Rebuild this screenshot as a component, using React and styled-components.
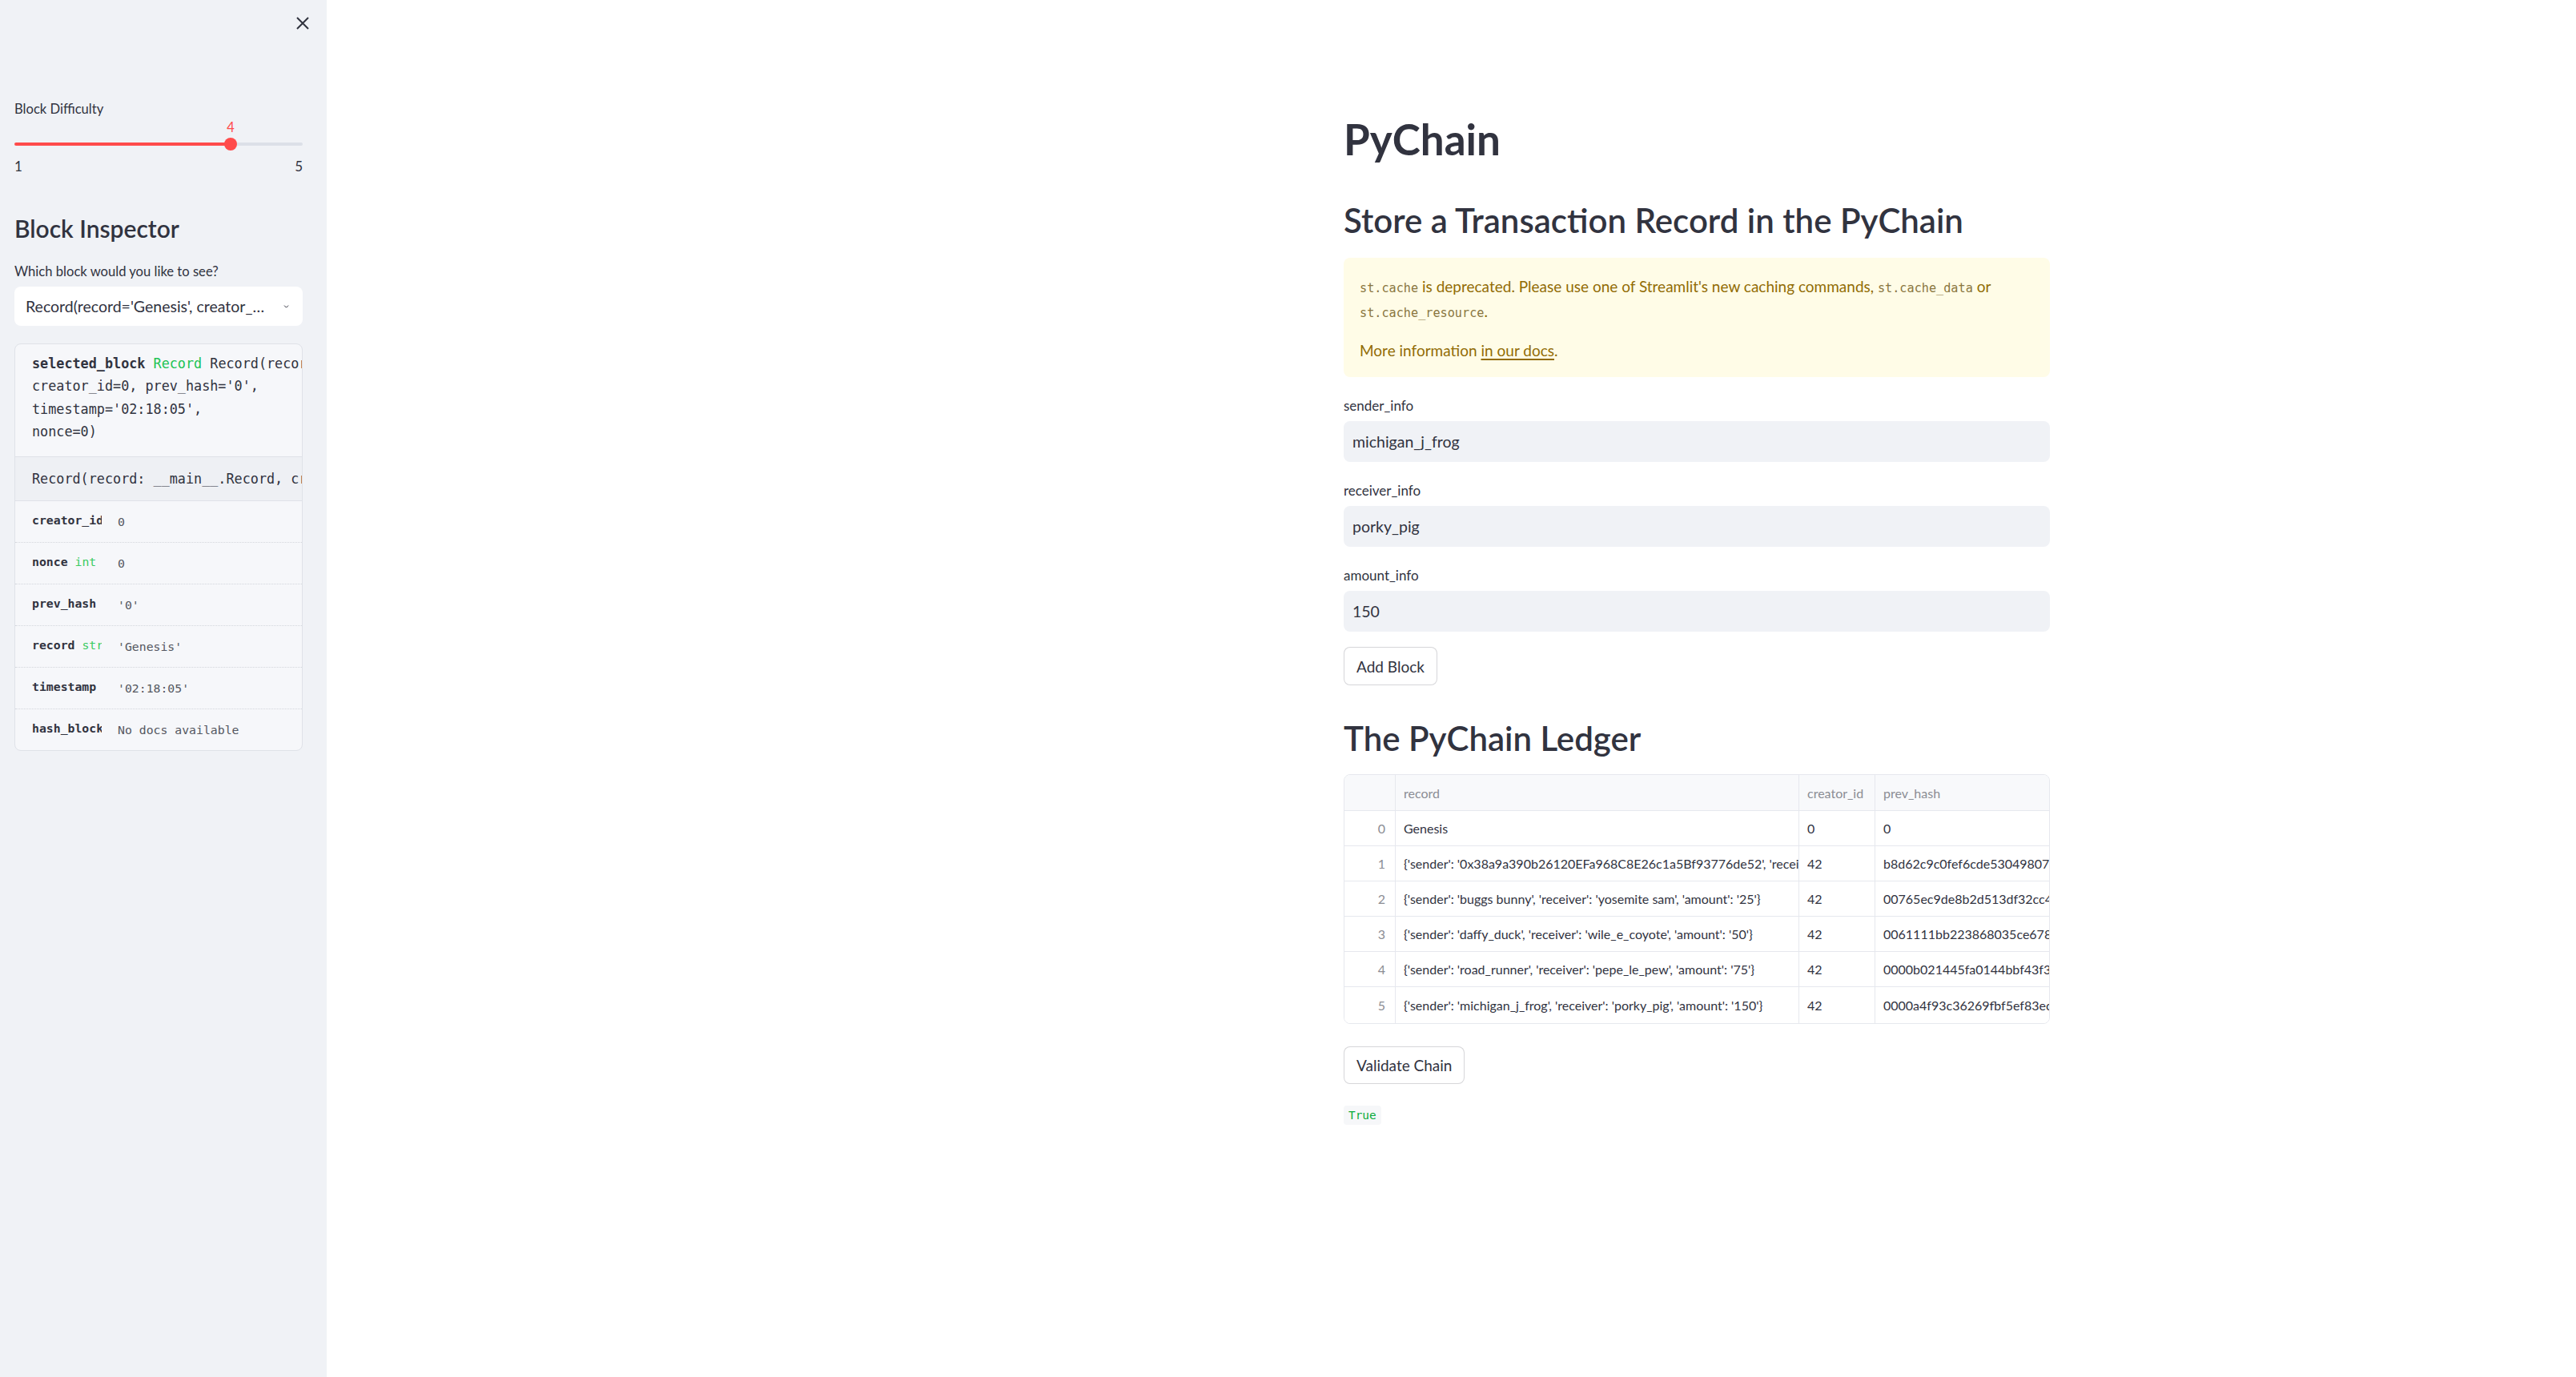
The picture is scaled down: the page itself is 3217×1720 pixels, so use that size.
import React from "react";
import styled, { createGlobalStyle } from "styled-components";
import { ChevronDown } from "lucide-react";

const GlobalStyle = createGlobalStyle`
  html, body {
    margin: 0;
    padding: 0;
    background: #ffffff;
  }
  body {
    font-family: Lato, "Noto Sans", sans-serif;
    color: #31333f;
  }
  * {
    box-sizing: border-box;
  }
`;

const MONO = `"DejaVu Sans Mono", "Liberation Mono", monospace`;

const Page = styled.div`
  display: flex;
  min-height: 1720px;
`;

/* ---------- sidebar ---------- */

const Sidebar = styled.aside`
  width: 408px;
  flex-shrink: 0;
  background: #f0f2f6;
  padding: 0 30px 0 18px;
  display: flex;
  flex-direction: column;
`;

const CloseRow = styled.div`
  height: 58px;
  margin-right: -8px;
  display: flex;
  align-items: center;
  justify-content: flex-end;
`;

const SliderLabel = styled.div`
  margin-top: 66px;
  font-size: 16.6px;
  line-height: 24px;
`;

const SliderTrack = styled.div`
  position: relative;
  margin-top: 24px;
  height: 16px;
  display: flex;
  align-items: center;
`;

const Rail = styled.div`
  width: 100%;
  height: 4px;
  border-radius: 2px;
  background: linear-gradient(
    to right,
    #ff4b4b 0,
    #ff4b4b ${(p) => p.$pct}%,
    #dce0e8 ${(p) => p.$pct}%,
    #dce0e8 100%
  );
`;

const Thumb = styled.div`
  position: absolute;
  top: 0;
  left: ${(p) => p.$pct}%;
  width: 16px;
  height: 16px;
  margin-left: -8px;
  border-radius: 50%;
  background: #ff4b4b;
`;

const ThumbValue = styled.span`
  position: absolute;
  top: -23px;
  left: 50%;
  transform: translateX(-50%);
  font-size: 16.5px;
  line-height: 20px;
  color: #ff4b4b;
`;

const Ticks = styled.div`
  margin-top: 9px;
  display: flex;
  justify-content: space-between;
  font-size: 17px;
  line-height: 22px;
`;

const SideHeading = styled.h3`
  margin: 46px 0 0;
  font-size: 30px;
  line-height: 40px;
  font-weight: 600;
`;

const SideLabel = styled.div`
  margin-top: 23px;
  font-size: 16.6px;
  line-height: 22px;
`;

const Select = styled.div`
  margin-top: 8px;
  height: 49px;
  background: #ffffff;
  border-radius: 8px;
  padding: 0 16px 0 14px;
  display: flex;
  align-items: center;
  justify-content: space-between;
  gap: 20px;
  font-size: 19.5px;
`;

const SelectText = styled.span`
  overflow: hidden;
  white-space: nowrap;
  text-overflow: ellipsis;
`;

const HelpCard = styled.div`
  margin-top: 22px;
  border: 1px solid #dfe2e8;
  border-radius: 8px;
  background: #f6f7fa;
  overflow: hidden;
  font-family: ${MONO};
`;

const HelpHead = styled.div`
  padding: 10px 0 17px 21px;
  font-size: 16.8px;
  line-height: 28.3px;
  white-space: pre;
  overflow: hidden;
  color: #31333f;
`;

const Strong = styled.span`
  font-weight: 700;
`;

const TypeName = styled.span`
  color: ${(p) => (p.$soft ? "#3ccb62" : "#21c354")};
  font-weight: 400;
`;

const HelpDoc = styled.div`
  height: 56px;
  border-top: 1px solid #dfe2e8;
  border-bottom: 1px solid #dfe2e8;
  background: #eef0f4;
  padding-left: 21px;
  font-size: 16.8px;
  line-height: 54px;
  white-space: pre;
  overflow: hidden;
`;

const HelpRow = styled.div`
  height: 52px;
  display: grid;
  grid-template-columns: 87px 1fr;
  column-gap: 20px;
  align-items: center;
  padding-left: 21px;
  border-bottom: 1px dotted #d3d6dc;
  &:last-child {
    border-bottom: none;
    height: 51px;
  }
`;

const HelpName = styled.span`
  font-size: 14.8px;
  font-weight: 700;
  white-space: nowrap;
  overflow: hidden;
  margin-top: -5px;
`;

const HelpValue = styled.span`
  font-size: 14.8px;
  color: #555761;
  white-space: nowrap;
`;

/* ---------- main ---------- */

const Main = styled.main`
  flex: 1;
`;

const Column = styled.div`
  width: 882px;
  margin-left: 1270px;
  display: flex;
  flex-direction: column;
  align-items: flex-start;
`;

const Title = styled.h1`
  margin: 142px 0 0;
  font-size: 53px;
  line-height: 64px;
  font-weight: 700;
`;

const Heading = styled.h2`
  margin: ${(p) => p.$top}px 0 0;
  font-size: 42px;
  line-height: 48px;
  font-weight: 600;
`;

const Warning = styled.div`
  margin-top: 23px;
  width: 100%;
  background: #fffce7;
  color: #926c05;
  border-radius: 8px;
  padding: 20px 20px 18px;
`;

const WarnPara = styled.p`
  margin: 0;
  font-size: 19px;
  line-height: 31px;
  & + & {
    margin-top: 18px;
  }
`;

const InlineCode = styled.code`
  font-family: ${MONO};
  font-size: 15.2px;
  line-height: 1;
  color: #8a7640;
`;

const DocLink = styled.a`
  color: #926c05;
  text-decoration: underline;
  text-decoration-thickness: 2px;
  text-underline-offset: 3px;
`;

const Field = styled.div`
  margin-top: 25px;
  width: 100%;
`;

const FieldLabel = styled.label`
  display: block;
  font-size: 17px;
  line-height: 22px;
`;

const Input = styled.div`
  margin-top: 8px;
  height: 51px;
  background: #f0f2f6;
  border-radius: 8px;
  padding: 0 11px;
  display: flex;
  align-items: center;
  font-size: 19.5px;
`;

const Button = styled.button`
  margin-top: ${(p) => p.$top}px;
  height: ${(p) => p.$h}px;
  padding: 0 15px;
  background: #ffffff;
  border: 1px solid rgba(49, 51, 63, 0.2);
  border-radius: 8px;
  font-family: inherit;
  font-size: 19px;
  color: #31333f;
`;

const Table = styled.div`
  margin-top: 21px;
  width: 100%;
  border: 1px solid #e6e8ee;
  border-radius: 8px;
  overflow: hidden;
`;

const TRow = styled.div`
  display: grid;
  grid-template-columns: 64px 504px 95px 1fr;
  height: ${(p) => (p.$head ? 45 : 44)}px;
  background: ${(p) => (p.$head ? "#f8f9fb" : "#ffffff")};
  border-bottom: 1px solid #e6e8ee;
  &:last-child {
    border-bottom: none;
    height: 45px;
  }
`;

const Cell = styled.div`
  display: flex;
  align-items: center;
  justify-content: ${(p) => (p.$index ? "flex-end" : "flex-start")};
  padding: 0 ${(p) => (p.$index ? "12px" : "10px")};
  border-right: 1px solid #e6e8ee;
  font-size: 16px;
  white-space: nowrap;
  overflow: hidden;
  color: ${(p) => (p.$muted ? "#8b8d94" : "#31333f")};
  &:last-child {
    border-right: none;
  }
`;

const Result = styled.code`
  margin-top: 27px;
  padding: 0 6px;
  height: 24px;
  line-height: 24px;
  border-radius: 4px;
  background: #f6f7f9;
  color: #09ab3b;
  font-family: ${MONO};
  font-size: 14.4px;
`;

const CloseIcon = () => (
  <svg width="16" height="16" viewBox="0 0 16 16">
    <path d="M1 1L15 15M15 1L1 15" stroke="#31333f" strokeWidth="2" />
  </svg>
);

const ledger = [
  ["0", "Genesis", "0", "0"],
  [
    "1",
    "{'sender': '0x38a9a390b26120EFa968C8E26c1a5Bf93776de52', 'receiver': 'porky_pig', 'amount': '100'}",
    "42",
    "b8d62c9c0fef6cde530498075c",
  ],
  [
    "2",
    "{'sender': 'buggs bunny', 'receiver': 'yosemite sam', 'amount': '25'}",
    "42",
    "00765ec9de8b2d513df32cc4a",
  ],
  [
    "3",
    "{'sender': 'daffy_duck', 'receiver': 'wile_e_coyote', 'amount': '50'}",
    "42",
    "0061111bb223868035ce678c0",
  ],
  [
    "4",
    "{'sender': 'road_runner', 'receiver': 'pepe_le_pew', 'amount': '75'}",
    "42",
    "0000b021445fa0144bbf43f3e8",
  ],
  [
    "5",
    "{'sender': 'michigan_j_frog', 'receiver': 'porky_pig', 'amount': '150'}",
    "42",
    "0000a4f93c36269fbf5ef83ec5",
  ],
];

const fields = [
  ["sender_info", "michigan_j_frog"],
  ["receiver_info", "porky_pig"],
  ["amount_info", "150"],
];

const attrs = [
  { name: "creator_id", value: "0" },
  { name: "nonce", type: "int", value: "0" },
  { name: "prev_hash", value: "'0'" },
  { name: "record", type: "str", value: "'Genesis'" },
  { name: "timestamp", value: "'02:18:05'" },
  { name: "hash_block", value: "No docs available" },
];

const difficulty = 4;
const pct = ((difficulty - 1) / (5 - 1)) * 100;

export default function App() {
  return (
    <Page>
      <GlobalStyle />
      <Sidebar>
        <CloseRow>
          <CloseIcon />
        </CloseRow>
        <SliderLabel>Block Difficulty</SliderLabel>
        <SliderTrack>
          <Rail $pct={pct} />
          <Thumb $pct={pct}>
            <ThumbValue>{difficulty}</ThumbValue>
          </Thumb>
        </SliderTrack>
        <Ticks>
          <span>1</span>
          <span>5</span>
        </Ticks>
        <SideHeading>Block Inspector</SideHeading>
        <SideLabel>Which block would you like to see?</SideLabel>
        <Select>
          <SelectText>
            Record(record='Genesis', creator_id=0, prev_hash='0',
            timestamp='02:18:05', nonce=0)
          </SelectText>
          <ChevronDown size={22} strokeWidth={2.6} color="#31333f" />
        </Select>
        <HelpCard>
          <HelpHead>
            <Strong>selected_block</Strong> <TypeName>Record</TypeName>{" "}
            Record(record='Genesis',{"\n"}creator_id=0, prev_hash='0',{"\n"}
            timestamp='02:18:05',{"\n"}nonce=0)
          </HelpHead>
          <HelpDoc>Record(record: __main__.Record, creator_id: int)</HelpDoc>
          {attrs.map((a) => (
            <HelpRow key={a.name}>
              <HelpName>
                {a.name}
                {a.type && (
                  <>
                    {" "}
                    <TypeName $soft>{a.type}</TypeName>
                  </>
                )}
              </HelpName>
              <HelpValue>{a.value}</HelpValue>
            </HelpRow>
          ))}
        </HelpCard>
      </Sidebar>

      <Main>
        <Column>
          <Title>PyChain</Title>
          <Heading $top={45}>Store a Transaction Record in the PyChain</Heading>
          <Warning>
            <WarnPara>
              <InlineCode>st.cache</InlineCode> is deprecated. Please use one
              of Streamlit's new caching commands,{" "}
              <InlineCode>st.cache_data</InlineCode> or{" "}
              <InlineCode>st.cache_resource</InlineCode>.
            </WarnPara>
            <WarnPara>
              More information <DocLink href="#">in our docs</DocLink>.
            </WarnPara>
          </Warning>
          {fields.map(([label, value]) => (
            <Field key={label}>
              <FieldLabel>{label}</FieldLabel>
              <Input>{value}</Input>
            </Field>
          ))}
          <Button $top={19} $h={48}>
            Add Block
          </Button>
          <Heading $top={42}>The PyChain Ledger</Heading>
          <Table>
            <TRow $head>
              <Cell $index $muted />
              <Cell $muted>record</Cell>
              <Cell $muted>creator_id</Cell>
              <Cell $muted>prev_hash</Cell>
            </TRow>
            {ledger.map(([i, record, creator, hash]) => (
              <TRow key={i}>
                <Cell $index $muted>
                  {i}
                </Cell>
                <Cell>{record}</Cell>
                <Cell>{creator}</Cell>
                <Cell>{hash}</Cell>
              </TRow>
            ))}
          </Table>
          <Button $top={28} $h={47}>
            Validate Chain
          </Button>
          <Result>True</Result>
        </Column>
      </Main>
    </Page>
  );
}
